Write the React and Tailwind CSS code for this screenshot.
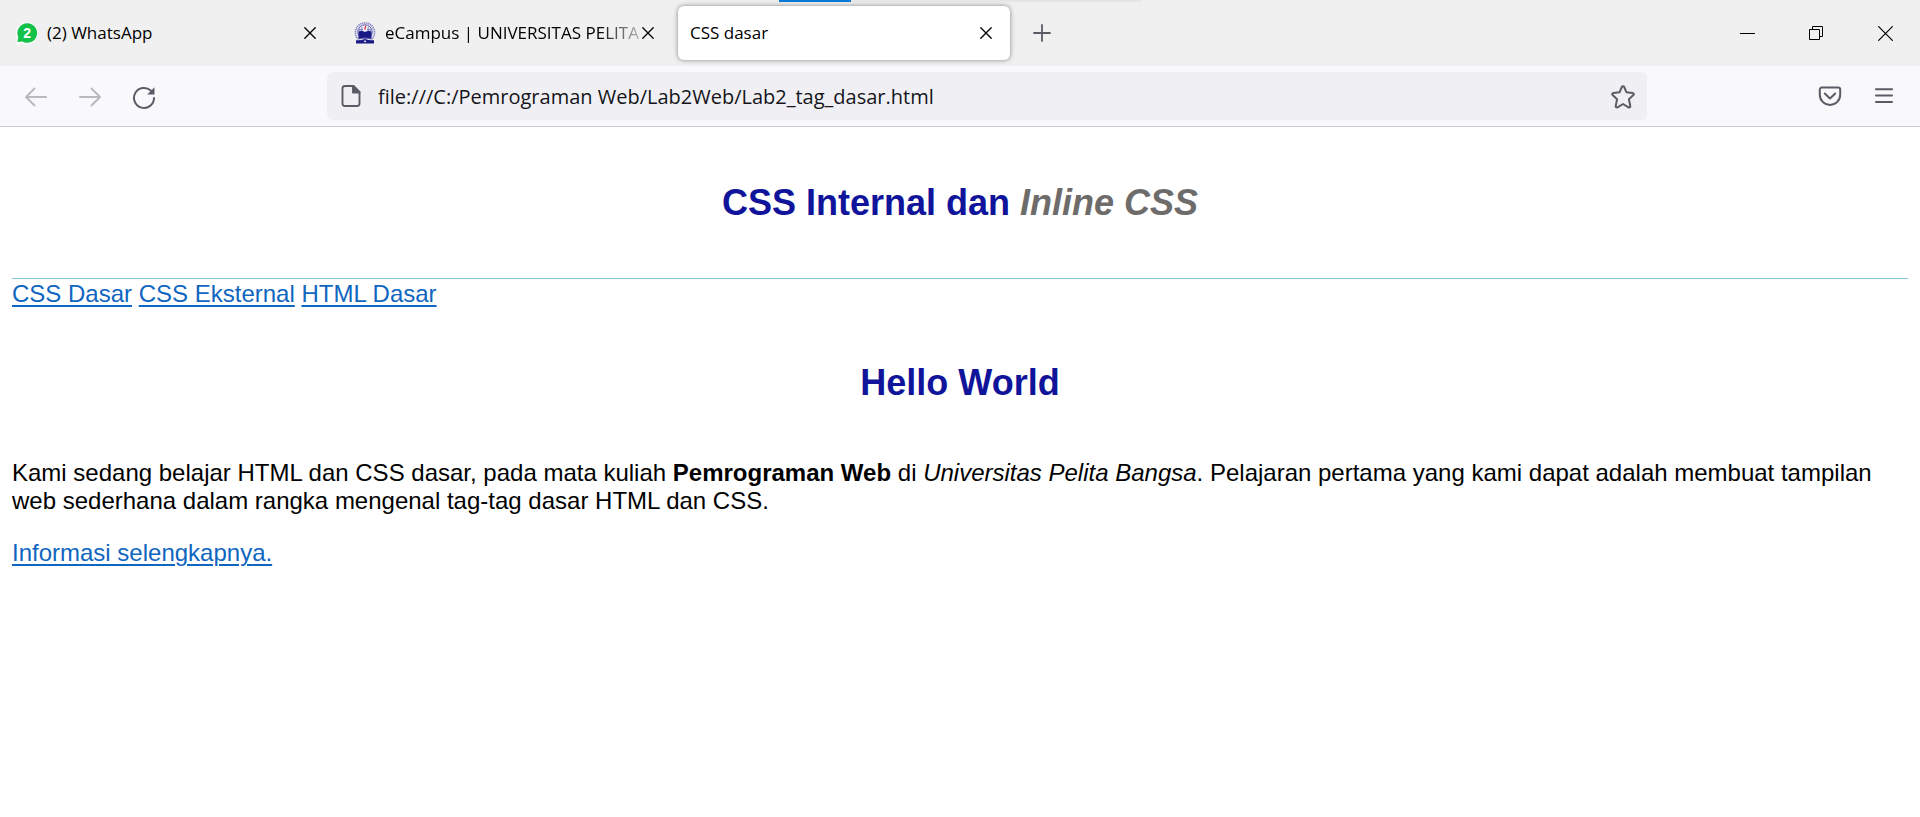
const iconStroke = {
  fill: 'none',
  stroke: 'currentColor',
  strokeLinecap: 'round',
  strokeLinejoin: 'round',
}

function WhatsAppIcon() {
  return (
    <svg viewBox="0 0 24 24" className="size-6 shrink-0" aria-hidden="true">
      <path d="M12 .8a11.200 11.200 0 1 1-4.600 21.400L1 23.300 2.200 17A11.200 11.200 0 0 1 12 .8Z" fill="#fafafa" />
      <path d="M12.200 2.200a9.800 9.800 0 1 1-4.800 18.300L2.400 21l.9-4.900A9.800 9.800 0 0 1 12.200 2.200Z" fill="#12c148" />
      <text x="12.2" y="17.2" textAnchor="middle" fontSize="14" fontWeight="700" fill="#fff" fontFamily="Liberation Sans, sans-serif">2</text>
    </svg>
  )
}

function CampusIcon() {
  return (
    <svg viewBox="0 0 24 24" className="size-6 shrink-0" aria-hidden="true">
      <circle cx="12" cy="11.500" r="9.600" fill="#e4e4f2" stroke="#8c8cc4" strokeWidth="1.6" strokeDasharray="1.4 0.6" />
      <circle cx="12" cy="11" r="7.200" fill="#efedf6" stroke="#5252a8" strokeWidth="0.9" />
      <path d="M6.800 8v3M8.800 6v4M15.200 6v4M17.200 8v3M6 8.500h4M14 8.500h4" stroke="#7474bc" strokeWidth="0.8" />
      <path d="M12.400 3.800c1.400 1.400.4 2.300.4 3.200s-.4 1.600-1 1.600c-1.600-1.200.8-2.600.6-4.800Z" fill="#d92e3c" />
      <path d="M5.500 10.600 9 9.800l3 1.200 3-1.200 3.500.8v7.400H5.500Z" fill="#1a1a86" />
      <path d="M3 19.200h4l5-1 5 1h4v3.300H3Z" fill="#1a1a86" />
      <path d="M5 18.400 12 17l7 1.400" fill="none" stroke="#c9c9e4" strokeWidth="0.6" />
      <path d="M10.500 20.200 12 19.200l1.500 1-1.500 1.400Z" fill="#d7d7f0" />
    </svg>
  )
}

function CrossIcon() {
  return (
    <svg viewBox="0 0 12 12" className="size-3" aria-hidden="true" {...iconStroke} strokeWidth="1.3">
      <path d="m.8.8 10.400 10.400M11.200.8.8 11.200" />
    </svg>
  )
}

function Tab({ title, icon, active, fade }) {
  return (
    <div
      className={
        active
          ? 'flex h-[54px] w-[332px] items-center rounded-md bg-white pr-3 pl-3 shadow-[0_0_5px_rgba(0,0,0,0.45)]'
          : 'flex h-[54px] w-[332px] items-center pr-3 pl-[13px]'
      }
    >
      {icon}
      <button
        role="tab"
        aria-selected={!!active}
        className={
          fade
            ? '-mr-1.5 ml-2 min-w-0 flex-1 overflow-hidden text-left whitespace-nowrap [mask-image:linear-gradient(to_left,rgba(0,0,0,0.2),black_44px)]'
            : active
              ? 'min-w-0 flex-1 text-left whitespace-nowrap'
              : 'ml-2 min-w-0 flex-1 text-left whitespace-nowrap'
        }
      >
        {title}
      </button>
      <button aria-label="Close tab" className="grid h-6 w-6 shrink-0 place-items-center">
        <CrossIcon />
      </button>
    </div>
  )
}

function TabStrip() {
  return (
    <header className="relative flex h-[66px] items-center bg-[#f0f0f0] pl-0.5 font-['Open_Sans',sans-serif] text-[17px] text-black">
      <div className="absolute top-0 left-[779px] flex h-[2px] w-[362px] bg-[#e5e5e5]">
        <div className="w-[72px] bg-[#0078d7]" />
      </div>
      <div role="tablist" className="flex gap-1.5">
        <Tab title="(2) WhatsApp" icon={<WhatsAppIcon />} />
        <Tab title="eCampus | UNIVERSITAS PELITA" icon={<CampusIcon />} fade />
        <Tab title="CSS dasar" active />
      </div>
      <button aria-label="New tab" className="ml-3 grid size-10 place-items-center text-[#5b5b66]">
        <svg viewBox="0 0 18 18" className="size-[18px]" aria-hidden="true" {...iconStroke} strokeWidth="1.8">
          <path d="M9 1v16M1 9h16" />
        </svg>
      </button>
      <div className="ml-auto flex h-full items-center text-black">
        <button aria-label="Minimize" className="grid h-full w-[69px] place-items-center">
          <svg viewBox="0 0 15 15" className="size-[15px]" aria-hidden="true">
            <path d="M0 7h15v1H0z" fill="currentColor" />
          </svg>
        </button>
        <button aria-label="Restore" className="grid h-full w-[69px] place-items-center">
          <svg viewBox="0 0 15 15" className="size-[15px]" aria-hidden="true" fill="none" stroke="currentColor">
            <path d="M.5 3.500h10v10H.5zM3.500 3.500v-3h10v10h-3" />
          </svg>
        </button>
        <button aria-label="Close window" className="grid h-full w-[69px] place-items-center">
          <svg viewBox="0 0 15 15" className="size-[15px]" aria-hidden="true" fill="none" stroke="currentColor" strokeWidth="1.200">
            <path d="m.3.3 14.400 14.400M14.700.3.3 14.700" />
          </svg>
        </button>
      </div>
    </header>
  )
}

function Toolbar() {
  return (
    <nav aria-label="Browser toolbar" className="flex h-[61px] items-center border-b border-[#ccccd1] bg-[#f9f9fb] px-[9px] text-[#5b5b66]">
      <div className="flex pt-0.5">
        <button aria-label="Back" disabled className="grid h-12 w-[54px] place-items-center text-[#b9b9bf]">
          <svg viewBox="0 0 24 24" className="size-6" aria-hidden="true" {...iconStroke} strokeWidth="1.9">
            <path d="M22 12H2M10.500 3.500 2 12l8.500 8.500" />
          </svg>
        </button>
        <button aria-label="Forward" disabled className="grid h-12 w-[54px] place-items-center text-[#b9b9bf]">
          <svg viewBox="0 0 24 24" className="size-6" aria-hidden="true" {...iconStroke} strokeWidth="1.9">
            <path d="M2 12h20M13.500 3.500 22 12l-8.500 8.500" />
          </svg>
        </button>
        <button aria-label="Reload" className="grid h-12 w-[54px] place-items-center">
          <svg viewBox="0 0 24 24" className="size-6" aria-hidden="true" {...iconStroke} strokeWidth="2">
            <path d="M22 13a10 10 0 1 1-3.200-7.400" />
            <path d="M22.500 2.200v7.300h-7.300Z" fill="currentColor" stroke="none" />
          </svg>
        </button>
      </div>
      <div className="mx-[156px] flex h-12 flex-1 items-center rounded-md bg-[#f0f0f4] px-3">
        <svg viewBox="0 0 24 24" className="size-6 shrink-0" aria-hidden="true" {...iconStroke} strokeWidth="1.9">
          <path d="M6 2h8.500l6 6v11.500a2.500 2.500 0 0 1-2.500 2.500H6a2.500 2.500 0 0 1-2.500-2.500v-15A2.500 2.500 0 0 1 6 2Z" />
          <path d="M14 2v6.500h6.500Z" fill="currentColor" />
        </svg>
        <input
          aria-label="Address"
          defaultValue="file:///C:/Pemrograman Web/Lab2Web/Lab2_tag_dasar.html"
          className="ml-[15px] min-w-0 flex-1 bg-transparent pt-0.5 font-['Open_Sans',sans-serif] text-[20px] text-[#15141a] outline-none"
        />
        <button aria-label="Bookmark this page" className="pt-0.5">
          <svg viewBox="0 0 24 24" className="size-6" aria-hidden="true" {...iconStroke} strokeWidth="2">
            <path d="M10.800 2a1.350 1.350 0 0 1 2.400 0l2.300 5.300 6.200.7a1.200 1.200 0 0 1 .7 2.100l-4.500 4.100 1.400 6.800a1.200 1.200 0 0 1-1.800 1.300L12 19l-5.500 3.300a1.200 1.200 0 0 1-1.800-1.300l1.400-6.800-4.500-4.100A1.200 1.200 0 0 1 2.300 8l6.200-.7Z" />
          </svg>
        </button>
      </div>
      <div className="flex">
        <button aria-label="Save to Pocket" className="grid h-12 w-[54px] place-items-center">
          <svg viewBox="0 0 24 24" className="size-6" aria-hidden="true" {...iconStroke} strokeWidth="2">
            <path d="M3.800 3.500h16.400a2 2 0 0 1 2 2v5.200a10.200 10.200 0 0 1-20.400 0V5.500a2 2 0 0 1 2-2Z" />
            <path d="m6.800 9.500 5.200 5 5.200-5" />
          </svg>
        </button>
        <button aria-label="Open application menu" className="grid h-12 w-[54px] place-items-center">
          <svg viewBox="0 0 24 24" className="size-6" aria-hidden="true" {...iconStroke} strokeWidth="2">
            <path d="M4 5.200h16M4 11.600h16M4 18h16" />
          </svg>
        </button>
      </div>
    </nav>
  )
}

const linkClass = 'text-[#0f66c0] underline decoration-2 underline-offset-3 [text-decoration-skip-ink:auto]'

export default function App() {
  return (
    <div className="min-h-screen bg-white">
      <TabStrip />
      <Toolbar />
      <main className="px-3 font-['Liberation_Sans',Arial,sans-serif] text-[24px] leading-7 text-black">
        <header className="border-b border-[#82c4d8] pt-14 pb-[55px]">
          <h1 className="text-center text-[36px] leading-10 font-bold text-[#10149a]">
            CSS Internal dan <i className="text-[#6e6b6b]">Inline CSS</i>
          </h1>
        </header>
        <nav aria-label="Pages" className="pt-px">
          <a href="#dasar" className={linkClass}>CSS Dasar</a>{' '}
          <a href="#eksternal" className={linkClass}>CSS Eksternal</a>{' '}
          <a href="#html" className={linkClass}>HTML Dasar</a>
        </nav>
        <h1 className="mt-[55px] mb-14 text-center text-[36px] leading-10 font-bold text-[#10149a]">Hello World</h1>
        <p>
          Kami sedang belajar HTML dan CSS dasar, pada mata kuliah <b>Pemrograman Web</b> di{' '}
          <i>Universitas Pelita Bangsa</i>. Pelajaran pertama yang kami dapat adalah membuat tampilan web
          sederhana dalam rangka mengenal tag-tag dasar HTML dan CSS.
        </p>
        <p className="mt-6">
          <a href="#info" className={linkClass}>Informasi selengkapnya.</a>
        </p>
      </main>
    </div>
  )
}
